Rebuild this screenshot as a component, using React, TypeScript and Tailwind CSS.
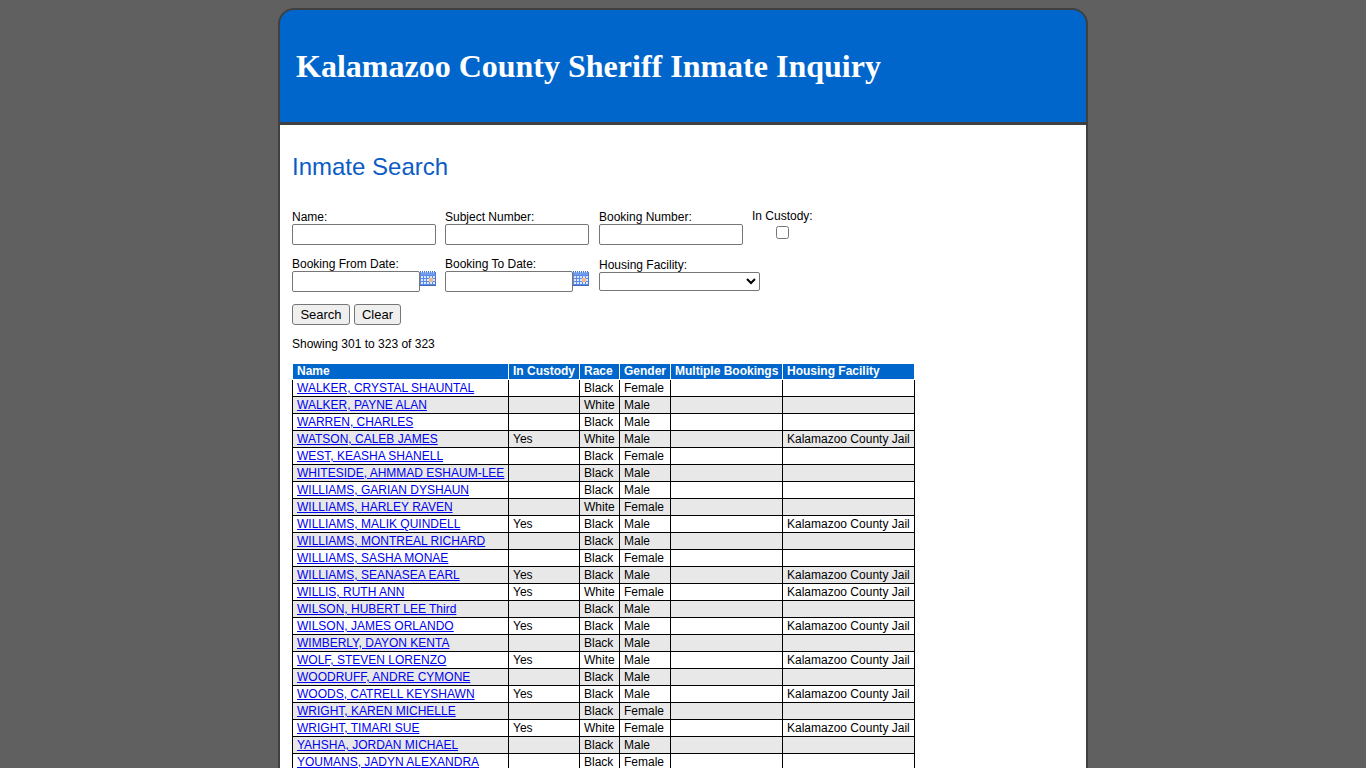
import { useState } from "react";

type Inmate = {
  name: string;
  race: "Black" | "White";
  gender: "Male" | "Female";
  inCustody?: boolean;
};

const facility = "Kalamazoo County Jail";

const inmates: Inmate[] = [
  { name: "WALKER, CRYSTAL SHAUNTAL", race: "Black", gender: "Female" },
  { name: "WALKER, PAYNE ALAN", race: "White", gender: "Male" },
  { name: "WARREN, CHARLES", race: "Black", gender: "Male" },
  { name: "WATSON, CALEB JAMES", race: "White", gender: "Male", inCustody: true },
  { name: "WEST, KEASHA SHANELL", race: "Black", gender: "Female" },
  { name: "WHITESIDE, AHMMAD ESHAUM-LEE", race: "Black", gender: "Male" },
  { name: "WILLIAMS, GARIAN DYSHAUN", race: "Black", gender: "Male" },
  { name: "WILLIAMS, HARLEY RAVEN", race: "White", gender: "Female" },
  { name: "WILLIAMS, MALIK QUINDELL", race: "Black", gender: "Male", inCustody: true },
  { name: "WILLIAMS, MONTREAL RICHARD", race: "Black", gender: "Male" },
  { name: "WILLIAMS, SASHA MONAE", race: "Black", gender: "Female" },
  { name: "WILLIAMS, SEANASEA EARL", race: "Black", gender: "Male", inCustody: true },
  { name: "WILLIS, RUTH ANN", race: "White", gender: "Female", inCustody: true },
  { name: "WILSON, HUBERT LEE Third", race: "Black", gender: "Male" },
  { name: "WILSON, JAMES ORLANDO", race: "Black", gender: "Male", inCustody: true },
  { name: "WIMBERLY, DAYON KENTA", race: "Black", gender: "Male" },
  { name: "WOLF, STEVEN LORENZO", race: "White", gender: "Male", inCustody: true },
  { name: "WOODRUFF, ANDRE CYMONE", race: "Black", gender: "Male" },
  { name: "WOODS, CATRELL KEYSHAWN", race: "Black", gender: "Male", inCustody: true },
  { name: "WRIGHT, KAREN MICHELLE", race: "Black", gender: "Female" },
  { name: "WRIGHT, TIMARI SUE", race: "White", gender: "Female", inCustody: true },
  { name: "YAHSHA, JORDAN MICHAEL", race: "Black", gender: "Male" },
  { name: "YOUMANS, JADYN ALEXANDRA", race: "Black", gender: "Female" },
];

const columns = [
  { label: "Name", width: "w-[216px]" },
  { label: "In Custody", width: "w-[71px]" },
  { label: "Race", width: "w-[40px]" },
  { label: "Gender", width: "w-[51px]" },
  { label: "Multiple Bookings", width: "w-[112px]" },
  { label: "Housing Facility", width: "w-[132px]" },
];

const inputClass = "h-[21px] rounded-xs border border-[#767676] bg-white px-1";
const buttonClass = "h-[21px] rounded-[3px] border border-[#767676] bg-[#efefef] text-[13px] leading-4";
const cellClass = "border border-black px-1 py-0 whitespace-nowrap";

function CalendarIcon() {
  return (
    <svg width="16" height="15" viewBox="0 0 16 15" shapeRendering="crispEdges" aria-hidden="true">
      <rect y="1" width="16" height="14" fill="#5b8be6" />
      <rect x="1" y="2" width="14" height="2" fill="#6f9cf0" />
      <path
        d="M0 0h1v1H0zM2 0h1v1H2zM4 0h1v1H4zM6 0h1v1H6zM8 0h1v1H8zM10 0h1v1h-1zM12 0h1v1h-1zM14 0h1v1h-1z"
        fill="#4272c4"
      />
      <path
        d="M1 1h1v1H1zM3 1h1v1H3zM5 1h1v1H5zM7 1h1v1H7zM9 1h1v1H9zM11 1h1v1h-1zM13 1h1v1h-1z"
        fill="#a9c4f5"
      />
      <path
        d="M1 5h2v2H1zM4 5h2v2H4zM7 5h2v2H7zM10 5h2v2h-2zM13 5h2v2h-2zM1 8h2v2H1zM4 8h2v2H4zM7 8h2v2H7zM13 8h2v2h-2zM1 11h2v2H1zM4 11h2v2H4zM7 11h2v2H7zM10 11h2v2h-2zM13 11h2v2h-2z"
        fill="#dce8fd"
      />
      <rect x="9" y="7" width="4" height="4" fill="#eeb98b" />
      <rect y="14" width="16" height="1" fill="#3c68bd" />
      <rect x="15" y="2" width="1" height="13" fill="#4a78cf" />
    </svg>
  );
}

function TextField({ id, label }: { id: string; label: string }) {
  return (
    <div className="flex flex-col">
      <label htmlFor={id}>{label}</label>
      <input id={id} type="text" className={`${inputClass} w-36`} />
    </div>
  );
}

function DateField({ id, label }: { id: string; label: string }) {
  return (
    <div className="flex flex-col">
      <label htmlFor={id}>{label}</label>
      <div className="flex items-start">
        <input id={id} type="text" className={`${inputClass} w-32`} />
        <button type="button" aria-label="Choose a date">
          <CalendarIcon />
        </button>
      </div>
    </div>
  );
}

export default function App() {
  const [inCustody, setInCustody] = useState(false);

  return (
    <div className="min-h-screen bg-[#606060] px-4 py-2 font-['Liberation_Sans',Arial,sans-serif] text-xs text-black">
      <div className="mx-auto max-w-[810px] rounded-t-2xl border-2 border-[#404040] bg-[#404040]">
        <header className="rounded-t-[14px] border-b-3 border-[#404040] bg-[#0066cc] px-4 py-9">
          <h1 className="font-['Liberation_Serif','Times_New_Roman',serif] text-[32px] leading-10 font-bold text-white">
            Kalamazoo County Sheriff Inmate Inquiry
          </h1>
        </header>

        <main className="bg-white px-3 pt-7 pb-6">
          <h2 className="text-2xl leading-7 text-[#0b5cc4]">Inmate Search</h2>

          <form className="mt-7 leading-[14px]" onSubmit={(e) => e.preventDefault()}>
            <div className="grid grid-cols-[153px_154px_153px_auto] items-center justify-start">
              <TextField id="name" label="Name:" />
              <TextField id="subject-number" label="Subject Number:" />
              <TextField id="booking-number" label="Booking Number:" />
              <div className="flex flex-col items-center">
                <label htmlFor="in-custody">In Custody:</label>
                <input
                  id="in-custody"
                  type="checkbox"
                  className="mt-[3px] mb-[7px] size-[13px]"
                  checked={inCustody}
                  onChange={(e) => setInCustody(e.target.checked)}
                />
              </div>
            </div>

            <div className="mt-[11px] grid grid-cols-[153px_154px_auto] items-center justify-start">
              <DateField id="from-date" label="Booking From Date:" />
              <DateField id="to-date" label="Booking To Date:" />
              <div className="flex flex-col">
                <label htmlFor="facility">Housing Facility:</label>
                <select id="facility" className="h-[19px] w-[161px] rounded-xs border border-[#767676] bg-white">
                  <option value=""></option>
                  <option value={facility}>{facility}</option>
                </select>
              </div>
            </div>

            <div className="mt-3 flex gap-1">
              <button type="submit" className={`${buttonClass} w-[58px]`}>
                Search
              </button>
              <button type="reset" className={`${buttonClass} w-[47px]`} onClick={() => setInCustody(false)}>
                Clear
              </button>
            </div>
          </form>

          <p className="mt-3 leading-[14px]">Showing 301 to 323 of 323</p>

          <table className="mt-3 w-[623px] table-fixed border-collapse leading-4">
            <thead>
              <tr className="bg-[#0066cc] text-left leading-[15px] text-white">
                {columns.map((col) => (
                  <th
                    key={col.label}
                    className={`${col.width} border border-white px-1 py-0 font-bold whitespace-nowrap`}
                  >
                    {col.label}
                  </th>
                ))}
              </tr>
            </thead>
            <tbody>
              {inmates.map((inmate) => (
                <tr key={inmate.name} className="even:bg-[#e8e8e8]">
                  <td className={cellClass}>
                    <a href="#" className="text-[#0000ee] underline">
                      {inmate.name}
                    </a>
                  </td>
                  <td className={cellClass}>{inmate.inCustody && "Yes"}</td>
                  <td className={cellClass}>{inmate.race}</td>
                  <td className={cellClass}>{inmate.gender}</td>
                  <td className={cellClass}></td>
                  <td className={cellClass}>{inmate.inCustody && facility}</td>
                </tr>
              ))}
            </tbody>
          </table>
        </main>
      </div>
    </div>
  );
}
